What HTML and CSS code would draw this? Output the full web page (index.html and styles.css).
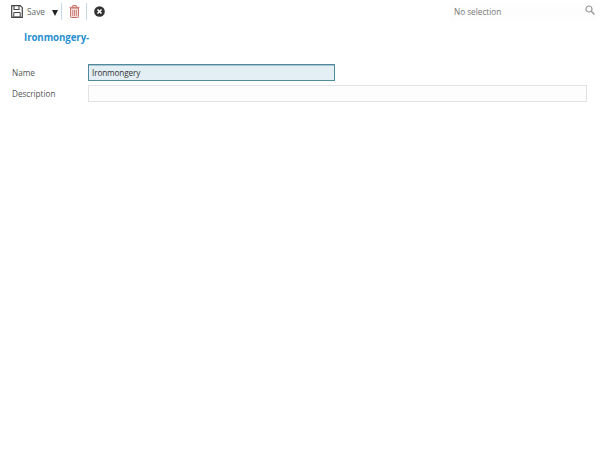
FILE: index.html
```html
<!DOCTYPE html>
<html lang="en">
<head>
<meta charset="utf-8">
<title>Ironmongery</title>
<link rel="stylesheet" href="styles.css">
</head>
<body>
<header class="toolbar">
  <div class="actions">
    <svg class="icon-save" width="12" height="13" viewBox="0 0 12 13"><path d="M.7.700h8.600l2 2v9.600H.7z" fill="#fff" stroke="#444" stroke-width="1.200"/><path d="M3 1v3.500h5V1" fill="none" stroke="#444" stroke-width="1.100"/><path d="M2.800 7.500h6.400V12H2.800z" fill="none" stroke="#444" stroke-width="1"/></svg>
    <span class="save-label">Save</span>
    <span class="caret"></span>
    <span class="divider"></span>
    <svg class="icon-trash" width="11" height="13" viewBox="0 0 11 13"><path d="M.5 2.300h10M3.700 2.300V.6h3.600v1.700" fill="none" stroke="#c9736b" stroke-width="1"/><path d="M1.500 3h8v8.500a1 1 0 0 1-1 1h-6a1 1 0 0 1-1-1z" fill="#f3dcd9" stroke="#c9736b" stroke-width="1"/><path d="M3.700 5v6M5.500 5v6M7.300 5v6" stroke="#c9736b" stroke-width=".8"/></svg>
    <span class="divider divider-second"></span>
    <svg class="icon-close" width="11" height="11" viewBox="0 0 12 12"><circle cx="6" cy="6" r="5.800" fill="#333"/><path d="M3.800 3.800l4.400 4.400M8.200 3.800l-4.400 4.400" stroke="#fff" stroke-width="1.800"/></svg>
  </div>
  <div class="search">
    <span class="search-text">No selection</span>
    <svg width="10" height="10" viewBox="0 0 10 10"><circle cx="4" cy="4" r="3" fill="none" stroke="#999" stroke-width="1.200"/><path d="M6.300 6.300L9.500 9.500" stroke="#999" stroke-width="1.500"/></svg>
  </div>
</header>
<h1 class="title">Ironmongery-</h1>
<form class="form">
  <div class="row">
    <label class="label" for="name">Name</label>
    <input class="input input-active" id="name" type="text" value="Ironmongery">
  </div>
  <div class="row">
    <label class="label" for="description">Description</label>
    <input class="input input-wide" id="description" type="text">
  </div>
</form>
</body>
</html>
```
FILE: styles.css
```css
* { box-sizing: border-box; }
html, body { margin: 0; height: 100%; background: #fff; }
body { font-family: "Open Sans", "Liberation Sans", sans-serif; color: #444; overflow: hidden; }
.toolbar { display: flex; justify-content: space-between; align-items: center; height: 23px; padding: 0 5px 0 11px; }
.actions { display: flex; align-items: center; }
.save-label { width: 17px; font-size: 8.300px; color: #666; margin-left: 4px; white-space: nowrap; }
.caret { width: 0; height: 0; margin: 3px 3px 0 8px; border-left: 3.500px solid transparent; border-right: 3.500px solid transparent; border-top: 6px solid #222; }
.divider { width: 1px; height: 17px; background: #c5d8e8; margin-right: 7px; }
.divider-second { margin: 0 7px 0 6px; }
.search { display: flex; justify-content: space-between; align-items: center; width: 145px; height: 18px; padding: 0 0 0 4px; background: #fdfdfd; }
.search-text { font-size: 8.200px; color: #777; }
.search svg { margin-top: -4px; }
.title { margin: 8px 0 0 24px; font-size: 9.700px; letter-spacing: -0.08px; line-height: 14px; font-weight: 700; color: #2a8fcf; }
.form { display: flex; flex-direction: column; gap: 4px; margin: 19px 13px 0 12px; }
.row { display: flex; align-items: center; height: 17px; }
.label { width: 76px; font-size: 8.200px; letter-spacing: -0.03px; color: #555; }
.input { height: 17px; padding: 0 3px; font: 8.200px "Open Sans", "Liberation Sans", sans-serif; letter-spacing: -0.12px; color: #333; border: 1px solid #e2e2e2; background: #fdfdfd; outline: none; }
.input-active { width: 247px; border-color: #4f8a9c; background: #e3eff4; box-shadow: inset 0 1px 0 #a9c6d0; }
.input-wide { flex: 1; }
```
